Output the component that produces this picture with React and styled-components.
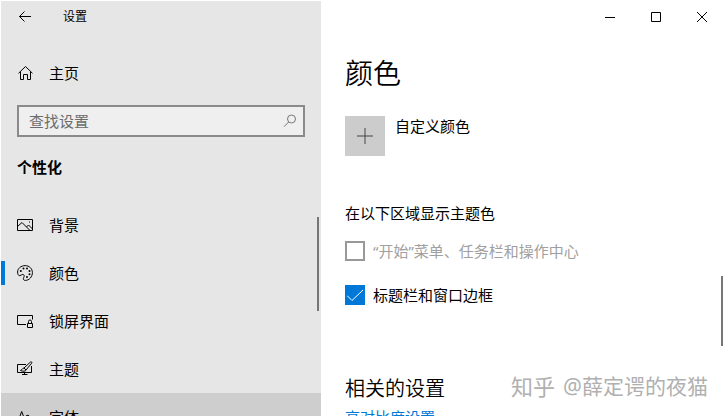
import React, { useState } from "react";
import styled, { createGlobalStyle, css } from "styled-components";

const GlobalStyle = createGlobalStyle`
  *, *::before, *::after { box-sizing: border-box; }
  body {
    margin: 0;
    background: #fff;
    color: #000;
    font: 400 15px/20px "Noto Sans", "Noto Sans CJK SC", sans-serif;
  }
  button, input { font: inherit; color: inherit; }
  h1, h2, h3 { margin: 0; }
`;

const Window = styled.div`
  position: relative;
  display: grid;
  grid-template-columns: 320px minmax(0, 1fr);
  height: 100vh;
  padding: 1px;
  overflow: hidden;
`;

const Sidebar = styled.aside`
  position: relative;
  display: flex;
  flex-direction: column;
  min-height: 0;
  overflow: hidden;
  background: #e6e6e6;
`;

const TitleBar = styled.header`
  flex: none;
  display: flex;
  align-items: center;
  gap: 30px;
  height: 32px;
  padding-left: 16px;
  font-size: 12px;
`;

const IconButton = styled.button`
  display: flex;
  align-items: center;
  justify-content: center;
  width: 16px;
  height: 32px;
  padding: 0;
  border: 0;
  background: none;
`;

const Icon = styled.svg`
  flex: none;
  display: block;
  width: 16px;
  height: 16px;
  fill: none;
  stroke: currentColor;
  stroke-width: 1;
`;

const HomeLink = styled.a`
  flex: none;
  display: flex;
  align-items: center;
  gap: 16px;
  height: 48px;
  margin-top: 16px;
  padding-left: 16px;
  color: inherit;
  text-decoration: none;
`;

const SearchBox = styled.label`
  flex: none;
  display: flex;
  align-items: center;
  height: 32px;
  margin: 8px 16px 0;
  padding: 0 5px 0 10px;
  border: 2px solid #8a8a8a;
  background: #efefef;
  color: #777;
`;

const SearchInput = styled.input`
  flex: 1;
  min-width: 0;
  height: 20px;
  padding: 0;
  border: 0;
  outline: 0;
  background: none;
  &::placeholder { color: #6c6c6c; opacity: 1; }
`;

const GroupTitle = styled.h2`
  flex: none;
  margin: 20px 16px 24px;
  font-size: 15px;
  line-height: 20px;
  font-weight: 700;
`;

const Nav = styled.nav`
  flex: none;
  display: flex;
  flex-direction: column;
`;

const NavItem = styled.a`
  display: flex;
  align-items: center;
  gap: 16px;
  height: 48px;
  padding-left: 16px;
  color: inherit;
  text-decoration: none;
  background: ${(p) => (p.$hovered ? "#cecece" : "transparent")};
  ${(p) =>
    p.$active &&
    css`
      padding-left: 0;
      &::before {
        content: "";
        width: 4px;
        height: 24px;
        margin-right: -4px;
        background: #0078d7;
      }
    `}
`;

const ScrollThumb = styled.div`
  position: absolute;
  right: 2px;
  top: ${(p) => p.$top}px;
  width: 2px;
  height: ${(p) => p.$length}px;
  background: #767676;
`;

const Content = styled.main`
  position: relative;
  min-width: 0;
  min-height: 0;
  overflow: hidden;
`;

const Controls = styled.div`
  display: flex;
  justify-content: flex-end;
  gap: 30px;
  height: 32px;
  padding-right: 15px;
`;

const Page = styled.div`
  padding: 20px 24px 0;
`;

const PageTitle = styled.h1`
  font-size: 28px;
  line-height: 40px;
  font-weight: 350;
`;

const CustomColor = styled.div`
  display: flex;
  align-items: flex-start;
  gap: 10px;
  margin-top: 23px;
`;

const AddButton = styled.button`
  display: flex;
  align-items: center;
  justify-content: center;
  width: 40px;
  height: 40px;
  padding: 0;
  border: 0;
  background: #ccc;
  color: #444;
`;

const SectionTitle = styled.h3`
  margin-top: 47px;
  font-size: 15px;
  line-height: 20px;
  font-weight: 400;
`;

const Options = styled.div`
  display: flex;
  flex-direction: column;
  gap: 24px;
  margin-top: 18px;
`;

const Option = styled.label`
  display: flex;
  align-items: center;
  gap: 8px;
  color: ${(p) => (p.$disabled ? "#a0a0a0" : "#000")};
`;

const CheckFrame = styled.span`
  display: grid;
  width: 20px;
  height: 20px;
  > * { grid-area: 1 / 1; }
  > svg { place-self: center; color: #fff; pointer-events: none; }
`;

const CheckInput = styled.input`
  appearance: none;
  width: 20px;
  height: 20px;
  margin: 0;
  border: 2px solid #999;
  background: #fff;
  &:checked { border-color: #0078d7; background: #0078d7; }
`;

const RelatedTitle = styled.h2`
  margin-top: 70px;
  font-size: 20px;
  line-height: 28px;
  font-weight: 350;
`;

const RelatedLink = styled.a`
  display: block;
  margin-top: 4px;
  color: #0078d7;
  text-decoration: none;
`;

const Watermark = styled.div`
  position: absolute;
  right: 17px;
  bottom: 16px;
  display: flex;
  align-items: center;
  gap: 8px;
  font-size: 21px;
  font-weight: 400;
  line-height: 28px;
  color: #b0b0b0;
  white-space: nowrap;
`;

const Brand = styled.span`
  font-size: 22px;
`;

const BackIcon = () => (
  <Icon viewBox="0 0 16 16"><path d="M2.5 7.500H14M7.500 2.500l-5 5 5 5" /></Icon>
);
const HomeIcon = () => (
  <Icon viewBox="0 0 16 16"><path d="M1.500 8.300 8.500 1.500l7 6.800M3.500 7v7.500h3V9.500h4v5h3V7" /></Icon>
);
const SearchIcon = () => (
  <Icon viewBox="0 0 16 16"><circle cx="9.500" cy="6" r="4" /><path d="M6.700 9 2 13.700" /></Icon>
);
const PictureIcon = () => (
  <Icon viewBox="0 0 16 16">
    <path d="M.5 2.500h15v11H.5zM.5 9.500l4.500-4 7.500 7.500M9.500 10l2-2 4 4" />
    <path d="M12 5h1" />
  </Icon>
);
const PaletteIcon = () => (
  <Icon viewBox="0 0 16 16">
    <path d="M.6 7C.6 3.500 4 .6 8.200.6c4.100 0 7.200 3.100 7.200 7 0 4.200-3.200 7.800-7 7.800-2 0-2.500-1.300-1.700-2.800.9-1.800.5-3.200-1-3.200-1.200 0-1.700 1.300-3 1.300C1.200 10.700.6 8.800.6 7Z" />
    <g fill="currentColor" stroke="none">
      <circle cx="3.800" cy="6" r="1" /><circle cx="6.500" cy="3.500" r="1" />
      <circle cx="10" cy="3.500" r="1" /><circle cx="12.500" cy="6" r="1" />
      <circle cx="12.500" cy="9.300" r="1" /><circle cx="10" cy="12" r="1" />
    </g>
  </Icon>
);
const LockScreenIcon = () => (
  <Icon viewBox="0 0 16 16">
    <path d="M9 11.500H.5v-9h15v4M10.500 10.500h5v4h-5zM11.500 10.500V8.500a1.500 1.500 0 0 1 3 0v2" />
  </Icon>
);
const ThemeIcon = () => (
  <Icon viewBox="0 0 16 16">
    <path d="M9 3.500H.5v8h14V5M7.500 11.500v2M5 13.500h5.500" />
    <path d="m7 7 6.500-6c.9-.6 1.800.4 1.200 1.200L9 9M7 7c-1.700 0-1.700 2-3.500 2.500C5.500 10.500 9 10.500 9 9Z" />
  </Icon>
);
const FontIcon = () => (
  <Icon viewBox="0 0 16 16">
    <path d="M1 12.500 4.700 2.500l3.800 10M2.300 9h5" />
    <path d="M9 7c1-1.200 3.500-1 3.500 1v4.500M12.500 9c-5-.3-5 3.500-2.400 3.500 1.300 0 2.400-1 2.400-2" />
  </Icon>
);
const MinimizeIcon = () => (
  <Icon viewBox="0 0 16 16"><path d="M3 8.500h10" /></Icon>
);
const MaximizeIcon = () => (
  <Icon viewBox="0 0 16 16"><path d="M3.500 3.500h9v9h-9z" /></Icon>
);
const CloseIcon = () => (
  <Icon viewBox="0 0 16 16"><path d="m3 3 10 10M13 3 3 13" /></Icon>
);
const PlusIcon = () => (
  <Icon viewBox="0 0 16 16"><path d="M0 8h16M8 0v16" /></Icon>
);
const CheckIcon = () => (
  <Icon viewBox="0 0 16 16"><path d="m0 8.500 5 5L16 3" /></Icon>
);

const NAV = [
  { label: "背景", icon: PictureIcon },
  { label: "颜色", icon: PaletteIcon, active: true },
  { label: "锁屏界面", icon: LockScreenIcon },
  { label: "主题", icon: ThemeIcon },
  { label: "字体", icon: FontIcon, hovered: true },
];

function CheckOption({ label, disabled, defaultChecked = false }) {
  const [checked, setChecked] = useState(defaultChecked);
  return (
    <Option $disabled={disabled}>
      <CheckFrame>
        <CheckInput
          type="checkbox"
          checked={checked}
          disabled={disabled}
          onChange={(e) => setChecked(e.target.checked)}
        />
        {checked && <CheckIcon />}
      </CheckFrame>
      {label}
    </Option>
  );
}

export default function App() {
  return (
    <>
      <GlobalStyle />
      <Window lang="zh-CN">
        <Sidebar>
          <TitleBar>
            <IconButton aria-label="返回"><BackIcon /></IconButton>
            <span>设置</span>
          </TitleBar>
          <HomeLink href="#home"><HomeIcon />主页</HomeLink>
          <SearchBox>
            <SearchInput type="text" placeholder="查找设置" aria-label="查找设置" />
            <SearchIcon />
          </SearchBox>
          <GroupTitle>个性化</GroupTitle>
          <Nav>
            {NAV.map(({ label, icon: Glyph, active, hovered }) => (
              <NavItem
                key={label}
                href={`#${label}`}
                $active={active}
                $hovered={hovered}
                aria-current={active ? "page" : undefined}
              >
                <Glyph />
                {label}
              </NavItem>
            ))}
          </Nav>
          <ScrollThumb $top={216} $length={94} />
        </Sidebar>
        <Content>
          <Controls>
            <IconButton aria-label="最小化"><MinimizeIcon /></IconButton>
            <IconButton aria-label="最大化"><MaximizeIcon /></IconButton>
            <IconButton aria-label="关闭"><CloseIcon /></IconButton>
          </Controls>
          <Page>
            <PageTitle>颜色</PageTitle>
            <CustomColor>
              <AddButton id="add-color" aria-label="自定义颜色"><PlusIcon /></AddButton>
              <label htmlFor="add-color">自定义颜色</label>
            </CustomColor>
            <SectionTitle>在以下区域显示主题色</SectionTitle>
            <Options>
              <CheckOption label="“开始”菜单、任务栏和操作中心" disabled />
              <CheckOption label="标题栏和窗口边框" defaultChecked />
            </Options>
            <RelatedTitle>相关的设置</RelatedTitle>
            <RelatedLink href="#contrast">高对比度设置</RelatedLink>
          </Page>
          <ScrollThumb $top={275} $length={70} />
          <Watermark>
            <Brand>知乎</Brand>
            <span>@薛定谔的夜猫</span>
          </Watermark>
        </Content>
      </Window>
    </>
  );
}
